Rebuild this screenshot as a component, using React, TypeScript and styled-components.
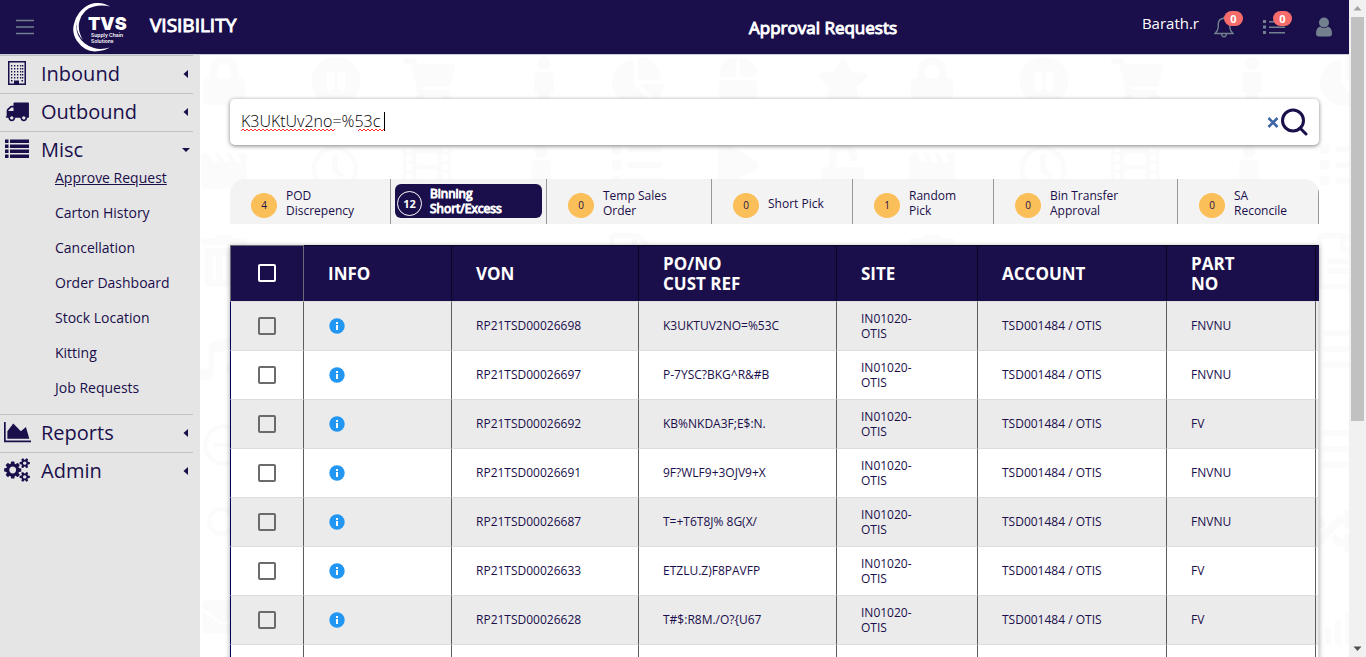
import React from "react";
import styled, { createGlobalStyle, css } from "styled-components";
import {
  FaLock,
  FaPauseCircle,
  FaShoppingCart,
  FaChartPie,
  FaStar,
  FaMale,
  FaRegClock,
  FaFilm,
  FaList,
  FaPlay,
  FaUnlock,
  FaTrashAlt,
  FaMusic,
  FaEnvelope,
  FaRegFileAlt,
  FaRandom,
  FaSignal,
  FaMouse,
} from "react-icons/fa";
import { MdMovieCreation, MdRemoveCircleOutline, MdSearch } from "react-icons/md";

const navy = "#1a0e4b";
const slate = "#73818f";

const GlobalStyle = createGlobalStyle`
  *, *::before, *::after { box-sizing: border-box; }
  body {
    margin: 0;
    background: #fff;
    color: ${navy};
    font-family: "Open Sans", "Noto Sans", sans-serif;
    font-size: 14px;
  }
  button, input { font-family: inherit; color: inherit; }
`;

const heavy = css`
  -webkit-text-stroke: 1px currentColor;
`;

const Window = styled.div`
  display: flex;
  height: 100vh;
  overflow: hidden;
`;

const Page = styled.div`
  flex: 1;
  min-width: 0;
  display: flex;
  flex-direction: column;
`;

const Header = styled.header`
  display: flex;
  align-items: center;
  flex: none;
  height: 55px;
  padding: 0 16px 0 15px;
  background: ${navy};
  border-bottom: 1px solid #c8ced3;
  color: #fff;
`;

const PlainButton = styled.button`
  display: flex;
  padding: 0;
  border: 0;
  background: none;
  cursor: pointer;
`;

const LogoBox = styled.div`
  display: flex;
  margin-left: 37px;
`;

const Brand = styled.div`
  margin-left: 22px;
  padding-bottom: 4px;
  font-size: 19px;
  line-height: 28px;
  ${heavy}
`;

const PageTitle = styled.h1`
  flex: 1;
  margin: 0;
  padding: 2px 0 0 268px;
  font-size: 17px;
  font-weight: 400;
  line-height: 24px;
  text-align: center;
  ${heavy}
`;

const UserArea = styled.div`
  display: flex;
  align-items: center;
`;

const UserName = styled.span`
  padding-bottom: 8px;
  font-size: 15px;
  line-height: 20px;
`;

const IconButton = styled(PlainButton)<{ $gap: number }>`
  position: relative;
  margin-left: ${(p) => p.$gap}px;
`;

const CountBadge = styled.span`
  position: absolute;
  top: -5px;
  left: 10px;
  width: 19px;
  height: 15px;
  border-radius: 8px;
  background: #f86c6b;
  color: #fff;
  font-size: 11px;
  font-weight: 700;
  line-height: 15px;
  text-align: center;
`;

const Body = styled.div`
  flex: 1;
  min-height: 0;
  display: flex;
`;

const Sidebar = styled.nav`
  flex: none;
  width: 200px;
  padding-right: 7px;
  background: #e5e5e5;
`;

const Group = styled.section`
  border-top: 1px solid #c2c2c4;
`;

const GroupButton = styled(PlainButton)`
  align-items: center;
  width: 100%;
  height: 37px;
  padding: 0 2px 2px 4px;
  font-size: 20px;
  line-height: 28px;
`;

const GroupIcon = styled.span`
  display: flex;
  align-items: center;
  width: 37px;
  height: 28px;
  padding-bottom: 2px;
`;

const GroupLabel = styled.span`
  flex: 1;
  text-align: left;
`;

const SubList = styled.ul`
  margin: -1px 0 0;
  padding: 0 0 1px 55px;
  list-style: none;
`;

const SubItem = styled.li`
  height: 35px;
  line-height: 20px;
`;

const SubLink = styled.a<{ $active?: boolean }>`
  color: inherit;
  font-size: 14px;
  text-decoration: ${(p) => (p.$active ? "underline" : "none")};
`;

const Main = styled.main`
  position: relative;
  flex: 1;
  min-width: 0;
  padding: 44px 30px 0;
  overflow: hidden;
`;

const Backdrop = styled.svg`
  position: absolute;
  inset: 0;
  width: 100%;
  height: 100%;
  color: #fbfbfb;
`;

const Content = styled.div`
  position: relative;
`;

const SearchBar = styled.form`
  position: relative;
  display: flex;
  align-items: center;
  height: 46px;
  padding: 0 10px 0 11px;
  border-radius: 5px;
  background: #fff;
  box-shadow: 0 1px 4px rgba(0, 0, 0, 0.5);
`;

const SearchInput = styled.input`
  flex: 1;
  min-width: 0;
  height: 30px;
  padding: 0 0 2px;
  border: 0;
  outline: 0;
  background: none;
  color: #000;
  font-size: 16px;
  font-weight: 300;
`;

const SpellMarks = styled.svg`
  position: absolute;
  left: 11px;
  top: 12px;
  pointer-events: none;
`;

const TabBar = styled.div<{ $tracks: string }>`
  display: grid;
  grid-template-columns: ${(p) => p.$tracks};
  height: 45px;
  margin-top: 34px;
  border-radius: 15px 15px 0 0;
  background: #f3f3f3;
  overflow: hidden;
`;

const TabCell = styled.div<{ $active?: boolean }>`
  display: flex;
  padding: ${(p) => (p.$active ? "5px 4px 6px" : "3px 0 0 21px")};
  border-right: 1px solid #999;
`;

const TabButton = styled(PlainButton)<{ $active?: boolean }>`
  flex: 1;
  align-items: center;
  gap: ${(p) => (p.$active ? 8 : 9)}px;
  padding-left: ${(p) => (p.$active ? "2px" : 0)};
  border-radius: 6px;
  background: ${(p) => (p.$active ? navy : "none")};
  color: ${(p) => (p.$active ? "#fff" : navy)};
  font-size: 12px;
  line-height: 15px;
  text-align: left;
`;

const TabCount = styled.span<{ $active?: boolean }>`
  flex: none;
  width: 26px;
  height: 25px;
  margin-top: 5px;
  border: 1px solid #fbbf5a;
  border-radius: 50%;
  background: #fbbf5a;
  font-size: 10px;
  line-height: 23px;
  text-align: center;
  ${(p) =>
    p.$active &&
    css`
      width: 25px;
      margin-top: 4px;
      border-color: #fff;
      background: none;
      font-size: 11px;
      font-weight: 700;
    `}
`;

const TabLabel = styled.span<{ $width: number; $active?: boolean }>`
  width: ${(p) => p.$width}px;
  ${(p) => p.$active && heavy}
`;

const Table = styled.table`
  width: 100%;
  margin-top: 21px;
  border-collapse: separate;
  border-spacing: 0;
  table-layout: fixed;
  box-shadow: 0 1px 5px rgba(0, 0, 0, 0.35);
`;

const HeadCell = styled.th<{ $check?: boolean }>`
  height: 56px;
  padding: ${(p) => (p.$check ? "0 0 1px" : "0 0 0 24px")};
  border: solid #0a0622;
  border-width: 1px 1px 0 0;
  background: ${navy};
  color: #fff;
  font-size: 17px;
  font-weight: 700;
  line-height: 20px;
  text-align: left;
  ${(p) =>
    p.$check &&
    css`
      border-color: #6d6b78;
      border-left-width: 1px;
    `}
`;

const HeadEdge = styled.td`
  padding: 0;
  border-top: 1px solid #0a0622;
  background: ${navy};
`;

const Row = styled.tr<{ $odd: boolean }>`
  background: ${(p) => (p.$odd ? "#ebebeb" : "#fff")};
`;

const Cell = styled.td<{ $check?: boolean; $edge?: boolean }>`
  height: 49px;
  padding: ${(p) => (p.$check || p.$edge ? "0" : "0 0 1px 24px")};
  border-top: 1px solid #dcdcdc;
  border-right: 1px solid ${(p) => (p.$edge ? "#dcdcdc" : "#5c5c5c")};
  border-left: ${(p) => (p.$check ? "1px solid #00005e" : "0")};
  font-size: 12px;
  line-height: 15px;
`;

const CheckBox = styled.input<{ $light?: boolean }>`
  appearance: none;
  display: block;
  width: 18px;
  height: 18px;
  margin: 0 auto;
  border: 2px solid ${(p) => (p.$light ? "#fff" : "#6b6b6b")};
  border-radius: 2px;
`;

const SiteText = styled.span`
  display: block;
  width: 60px;
`;

const ScrollTrack = styled.div`
  flex: none;
  display: flex;
  flex-direction: column;
  align-items: center;
  width: 17px;
  background: #f1f1f1;
`;

const ScrollThumb = styled.div`
  flex: 404 1 0;
  width: 13px;
  background: #c1c1c1;
`;

const ScrollRest = styled.div`
  flex: 219 1 0;
`;

const Logo = () => (
  <svg width="56" height="50" viewBox="72 2 56 50" role="img" aria-label="TVS Supply Chain Solutions">
    <path d="M110 6.500A24 24 0 0 0 79 13Q75 18 74 24Q71.500 33 77 41Q86 53.500 99 51Q105 50.500 110 47.500Q101 50 94 48Q83 45 78 35Q74.500 26 78.500 17.500Q85 5.500 97 4.800Q104 4 110 6.500Z" fill="#fff" />
    <path d="M110 6.500Q95 -1 84 8Q77 15 76.500 23Q76 33 83 40Q77 30 79.500 21Q83 9 94 6.500Q102 4.500 110 6.500Z" fill="#fff" />
    <text x="88" y="30" fill="#fff" fontFamily="Inter, sans-serif" fontWeight="900" fontSize="18">TVS</text>
    <text x="91" y="37" fill="#fff" fontFamily="Inter, sans-serif" fontWeight="600" fontSize="5">Supply Chain</text>
    <text x="91" y="43" fill="#fff" fontFamily="Inter, sans-serif" fontWeight="600" fontSize="5">Solutions</text>
  </svg>
);

const BuildingIcon = () => (
  <svg width="26" height="26" viewBox="0 0 26 26" fill={navy}>
    <path fillRule="evenodd" d="M4 1h18v24H4zM5.500 2.500v21H10v-3h5v3h5.500v-21z" />
    {[5, 8, 11, 14, 17].map((y) =>
      [7, 10, 13, 16, 18].map((x) => <rect key={`${x}-${y}`} x={x} y={y} width="1.300" height="1.500" />)
    )}
    <path d="M7 20h1.500v1.500H7zM17.500 20H19v1.500h-1.500z" />
  </svg>
);

const TruckIcon = () => (
  <svg width="26" height="24" viewBox="-70 0 1941 1792" fill={navy}>
    <path d="M640 1408q0-52-38-90t-90-38-90 38-38 90 38 90 90 38 90-38 38-90zm-384-512h384v-256h-158q-13 0-22 9l-195 195q-9 9-9 22v30zm1280 512q0-52-38-90t-90-38-90 38-38 90 38 90 90 38 90-38 38-90zm256-1088v1024q0 15-4 26.500t-13.500 18.500-16.500 11.500-23.500 6-22.500 2-25.500 0-22.500-.5q0 106-75 181t-181 75-181-75-75-181h-384q0 106-75 181t-181 75-181-75-75-181h-64q-3 0-22.500.5t-25.500 0-22.500-2-23.500-6-16.500-11.500-13.500-18.500-4-26.500q0-26 19-45t45-19v-320q0-8-.5-35t0-38 2.500-34.500 6.500-37 14-30.500 22.500-30l198-198q19-19 50.500-32t58.500-13h160v-192q0-26 19-45t45-19h1024q26 0 45 19t19 45z" />
  </svg>
);

const ListIcon = () => (
  <svg width="26" height="20" viewBox="0 0 26 20" fill={navy}>
    {[0, 5, 10, 15].map((y) => (
      <path key={y} d={`M1 ${y + 0.5}h3.500v3.400H1zM6 ${y + 0.5}h19v3.400H6z`} />
    ))}
  </svg>
);

const AreaIcon = () => (
  <svg width="27" height="24" viewBox="0 0 2048 1792" fill={navy}>
    <path d="M2048 1536v128h-2048v-1536h128v1408h1920zm-384-1024l256 896h-1664v-576l448-576 576 576z" />
  </svg>
);

const CogsIcon = () => (
  <svg width="26" height="24" viewBox="0 0 1920 1792" fill={navy}>
    <path d="M896 896q0-106-75-181t-181-75-181 75-75 181 75 181 181 75 181-75 75-181zm768 512q0-52-38-90t-90-38-90 38-38 90q0 53 37.500 90.500t90.500 37.500 90.500-37.500 37.500-90.500zm0-1024q0-52-38-90t-90-38-90 38-38 90q0 53 37.500 90.500t90.500 37.500 90.500-37.500 37.500-90.500zm-384 421v185q0 10-7 19.500t-16 10.500l-155 24q-11 35-32 76 34 48 90 115 7 11 7 20 0 12-7 19-23 30-82.500 89.500t-78.500 59.500q-11 0-21-7l-115-90q-37 19-77 31-11 108-23 155-7 24-30 24h-186q-11 0-20-7.500t-10-17.500l-23-153q-34-10-75-31l-118 89q-7 7-20 7-11 0-21-8-144-133-144-160 0-9 7-19 10-14 41-53t47-61q-23-44-35-82l-152-24q-10-1-17-9.500t-7-19.500v-185q0-10 7-19.500t16-10.500l155-24q11-35 32-76-34-48-90-115-7-11-7-20 0-12 7-20 22-30 82-89t79-59q11 0 21 7l115 90q34-18 77-32 11-108 23-154 7-24 30-24h186q11 0 20 7.500t10 17.500l23 153q34 10 75 31l118-89q8-7 20-7 11 0 21 8 144 133 144 160 0 8-7 19-12 16-42 54t-45 60q23 48 34 82l152 23q10 2 17 10.500t7 19.500zm640 533v140q0 16-149 31-12 27-30 52 51 113 51 138 0 4-4 7-122 71-124 71-8 0-46-47t-52-68q-20 2-30 2t-30-2q-14 21-52 68t-46 47q-2 0-124-71-4-3-4-7 0-25 51-138-18-25-30-52-149-15-149-31v-140q0-16 149-31 13-29 30-52-51-113-51-138 0-4 4-7 4-2 35-20t59-34 30-16q8 0 46 46.500t52 67.500q20-2 30-2t30 2q51-71 92-112l6-2q4 0 124 70 4 3 4 7 0 25-51 138 17 23 30 52 149 15 149 31zm0-1024v140q0 16-149 31-12 27-30 52 51 113 51 138 0 4-4 7-122 71-124 71-8 0-46-47t-52-68q-20 2-30 2t-30-2q-14 21-52 68t-46 47q-2 0-124-71-4-3-4-7 0-25 51-138-18-25-30-52-149-15-149-31v-140q0-16 149-31 13-29 30-52-51-113-51-138 0-4 4-7 4-2 35-20t59-34 30-16q8 0 46 46.500t52 67.500q20-2 30-2t30 2q51-71 92-112l6-2q4 0 124 70 4 3 4 7 0 25-51 138 17 23 30 52 149 15 149 31z" />
  </svg>
);

const Caret = ({ open }: { open?: boolean }) => (
  <svg width="10" height="10" viewBox="0 0 10 10" fill={navy}>
    <path d={open ? "M1 3h8L5 7z" : "M7 1v8L2.500 5z"} />
  </svg>
);

const BellIcon = () => (
  <svg width="20" height="22" viewBox="0 0 20 22" fill="none" stroke={slate} strokeWidth="1.400">
    <path d="M1 17.500h18q-3-2.500-3.200-6V8Q15.500 2.500 10 2.200Q4.500 2.500 4.200 8v3.500Q4 15 1 17.500zM7.500 18q.5 2.800 2.500 2.800t2.500-2.800M10 2V.8" />
  </svg>
);

const MenuListIcon = () => (
  <svg width="22" height="22" viewBox="0 0 22 22" fill={slate}>
    {[4, 9.500, 15].map((y) => (
      <path key={y} d={`M0 ${y}h3v3H0zM6 ${y + 1}h16v1.500H6z`} />
    ))}
  </svg>
);

const PersonIcon = () => (
  <svg width="18" height="20" viewBox="0 0 18 20" fill={slate}>
    <circle cx="9" cy="5.500" r="5" />
    <path d="M5 9.500Q9 13 13 9.500Q17 11 17 16.500Q17 19.500 14 19.500H4Q1 19.500 1 16.500Q1 11 5 9.500z" />
  </svg>
);

const InfoIcon = () => (
  <svg width="18" height="18" viewBox="-1 -1 18 18" role="img" aria-label="Details">
    <circle cx="8" cy="8" r="7.700" fill="#2196f3" />
    <path d="M7 4h2v2H7zM7 7h2v5H7z" fill="#fff" />
  </svg>
);

// Faint pictograms behind the content: icon, centre x, centre y, size
const pictos: [React.ComponentType<any>, number, number, number][] = [
  [FaLock, 24, 26, 48],
  [FaPauseCircle, 136, 26, 50],
  [FaShoppingCart, 229, 26, 52],
  [FaMale, 344, 28, 52],
  [FaChartPie, 438, 26, 52],
  [FaMouse, 538, 28, 50],
  [FaStar, 643, 26, 52],
  [MdMovieCreation, 24, 116, 54],
  [FaRegClock, 135, 114, 48],
  [FaFilm, 227, 112, 48],
  [FaMale, 341, 116, 52],
  [FaList, 437, 110, 50],
  [FaPlay, 538, 110, 46],
  [FaUnlock, 643, 112, 48],
  [FaTrashAlt, 24, 206, 52],
  [FaRegFileAlt, 430, 206, 56],
  [FaMusic, 20, 302, 46],
  [MdRemoveCircleOutline, 24, 390, 50],
  [MdSearch, 27, 472, 54],
  [FaEnvelope, 24, 562, 44],
  [FaList, 424, 294, 50],
  [FaList, 424, 394, 50],
  [FaRandom, 424, 476, 50],
  [FaSignal, 430, 570, 50],
];

const groups = [
  { name: "Inbound", icon: <BuildingIcon /> },
  { name: "Outbound", icon: <TruckIcon /> },
  {
    name: "Misc",
    icon: <ListIcon />,
    items: [
      "Approve Request",
      "Carton History",
      "Cancellation",
      "Order Dashboard",
      "Stock Location",
      "Kitting",
      "Job Requests",
    ],
  },
  { name: "Reports", icon: <AreaIcon /> },
  { name: "Admin", icon: <CogsIcon /> },
];

const tabs = [
  { count: 4, label: "POD Discrepency", share: 161, width: 74 },
  { count: 12, label: "Binning Short/Excess", share: 156, width: 80, active: true },
  { count: 0, label: "Temp Sales Order", share: 165, width: 80 },
  { count: 0, label: "Short Pick", share: 141, width: 70 },
  { count: 1, label: "Random Pick", share: 141, width: 60 },
  { count: 0, label: "Bin Transfer Approval", share: 184, width: 80 },
  { count: 0, label: "SA Reconcile", share: 141, width: 60 },
];

const tabTracks = tabs.map((t) => `minmax(0, ${t.share}fr)`).join(" ");

const columns = [74, 148, 187, 198, 141, 189, 149, 3];

const rows = [
  ["RP21TSD00026698", "K3UKTUV2NO=%53C", "FNVNU"],
  ["RP21TSD00026697", "P-7YSC?BKG^R&#B", "FNVNU"],
  ["RP21TSD00026692", "KB%NKDA3F;E$:N.", "FV"],
  ["RP21TSD00026691", "9F?WLF9+3OJV9+X", "FNVNU"],
  ["RP21TSD00026687", "T=+T6T8J% 8G(X/", "FNVNU"],
  ["RP21TSD00026633", "ETZLU.Z)F8PAVFP", "FV"],
  ["RP21TSD00026628", "T#$:R8M./O?{U67", "FV"],
];

const wave = (from: number, to: number) => {
  let d = `M${from} 20`;
  for (let x = from + 2, i = 0; x <= to; x += 2, i++) d += `L${x} ${i % 2 ? 20 : 18}`;
  return d;
};

export default function App() {
  return (
    <>
      <GlobalStyle />
      <Window>
        <Page>
          <Header>
            <PlainButton aria-label="Toggle menu">
              <svg width="20" height="16" viewBox="0 0 20 16" stroke={slate} strokeWidth="1.300">
                <path d="M1 1.500h18M1 8h18M1 14.500h18" />
              </svg>
            </PlainButton>
            <LogoBox>
              <Logo />
            </LogoBox>
            <Brand>VISIBILITY</Brand>
            <PageTitle>Approval Requests</PageTitle>
            <UserArea>
              <UserName>Barath.r</UserName>
              <IconButton $gap={15} aria-label="Notifications">
                <BellIcon />
                <CountBadge>0</CountBadge>
              </IconButton>
              <IconButton $gap={29} aria-label="Tasks">
                <MenuListIcon />
                <CountBadge>0</CountBadge>
              </IconButton>
              <IconButton $gap={30} aria-label="Account">
                <PersonIcon />
              </IconButton>
            </UserArea>
          </Header>
          <Body>
            <Sidebar>
              {groups.map((g) => (
                <Group key={g.name}>
                  <GroupButton>
                    <GroupIcon>{g.icon}</GroupIcon>
                    <GroupLabel>{g.name}</GroupLabel>
                    <Caret open={!!g.items} />
                  </GroupButton>
                  {g.items && (
                    <SubList>
                      {g.items.map((item, i) => (
                        <SubItem key={item}>
                          <SubLink href="#" $active={i === 0}>
                            {item}
                          </SubLink>
                        </SubItem>
                      ))}
                    </SubList>
                  )}
                </Group>
              ))}
            </Sidebar>
            <Main>
              <Backdrop aria-hidden="true">
                {[0, 708].map((shift) =>
                  pictos.map(([Icon, cx, cy, size], i) => (
                    <Icon key={`${shift}-${i}`} x={cx + shift - size / 2} y={cy - size / 2} size={size} />
                  ))
                )}
              </Backdrop>
              <Content>
                <SearchBar>
                  <SearchInput aria-label="Search requests" defaultValue="K3UKtUv2no=%53c" spellCheck={false} />
                  <SpellMarks width="146" height="22" fill="none" aria-hidden="true">
                    <path d={wave(0, 94)} stroke="#f33" />
                    <path d={wave(117, 143)} stroke="#f33" />
                    <path d="M143.500 1v19" stroke="#000" />
                  </SpellMarks>
                  <PlainButton type="button" aria-label="Clear">
                    <svg width="12" height="12" viewBox="0 0 12 12" stroke="#3c64a4" strokeWidth="2.600">
                      <path d="M1.500 2l9 9M10.500 2l-9 9" />
                    </svg>
                  </PlainButton>
                  <PlainButton type="button" aria-label="Search">
                    <svg width="30" height="28" viewBox="0 0 30 28" fill="none" stroke={navy} strokeWidth="3">
                      <circle cx="14" cy="12.500" r="10.500" />
                      <path d="M21 20l6 6" strokeLinecap="round" />
                    </svg>
                  </PlainButton>
                </SearchBar>
                <TabBar $tracks={tabTracks}>
                  {tabs.map((t) => (
                    <TabCell key={t.label} $active={t.active}>
                      <TabButton $active={t.active}>
                        <TabCount $active={t.active}>{t.count}</TabCount>
                        <TabLabel $width={t.width} $active={t.active}>
                          {t.label}
                        </TabLabel>
                      </TabButton>
                    </TabCell>
                  ))}
                </TabBar>
                <Table>
                  <colgroup>
                    {columns.map((w, i) => (
                      <col key={i} width={w} />
                    ))}
                  </colgroup>
                  <thead>
                    <tr>
                      <HeadCell $check>
                        <CheckBox type="checkbox" $light aria-label="Select all" />
                      </HeadCell>
                      <HeadCell>INFO</HeadCell>
                      <HeadCell>VON</HeadCell>
                      <HeadCell>
                        PO/NO
                        <br />
                        CUST REF
                      </HeadCell>
                      <HeadCell>SITE</HeadCell>
                      <HeadCell>ACCOUNT</HeadCell>
                      <HeadCell>
                        PART
                        <br />
                        NO
                      </HeadCell>
                      <HeadEdge />
                    </tr>
                  </thead>
                  <tbody>
                    {rows.map(([von, ref, part], i) => (
                      <Row key={von} $odd={i % 2 === 0}>
                        <Cell $check>
                          <CheckBox type="checkbox" aria-label={`Select ${von}`} />
                        </Cell>
                        <Cell>
                          <PlainButton>
                            <InfoIcon />
                          </PlainButton>
                        </Cell>
                        <Cell>{von}</Cell>
                        <Cell>{ref}</Cell>
                        <Cell>
                          <SiteText>IN01020-OTIS</SiteText>
                        </Cell>
                        <Cell>TSD001484 / OTIS</Cell>
                        <Cell>{part}</Cell>
                        <Cell $edge />
                      </Row>
                    ))}
                    <Row $odd={false}>
                      {columns.map((_, i) => (
                        <Cell key={i} $check={i === 0} $edge={i === 7} />
                      ))}
                    </Row>
                  </tbody>
                </Table>
              </Content>
            </Main>
          </Body>
        </Page>
        <ScrollTrack aria-hidden="true">
          <svg width="17" height="17" fill="#a3a3a3">
            <path d="M8.500 6l4 4.500h-8z" />
          </svg>
          <ScrollThumb />
          <ScrollRest />
          <svg width="17" height="17" fill="#505050">
            <path d="M8.500 11l4-4.500h-8z" />
          </svg>
        </ScrollTrack>
      </Window>
    </>
  );
}
